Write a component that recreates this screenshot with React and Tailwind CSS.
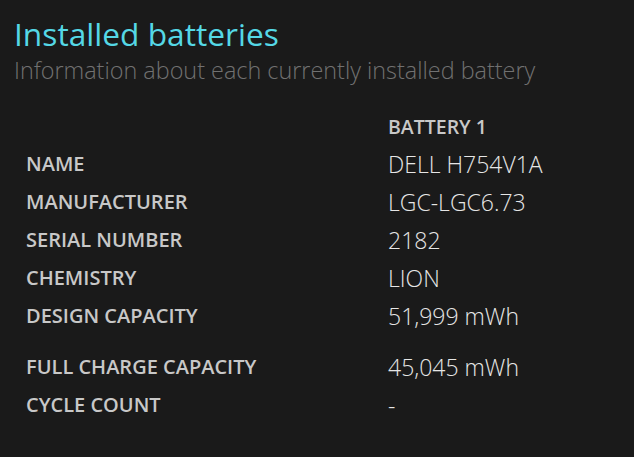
export default function App() {
  const rows = [
    ["NAME", "DELL H754V1A", ""],
    ["MANUFACTURER", "LGC-LGC6.73", ""],
    ["SERIAL NUMBER", "2182", ""],
    ["CHEMISTRY", "LION", ""],
    ["DESIGN CAPACITY", "51,999 mWh", ""],
    ["FULL CHARGE CAPACITY", "45,045 mWh", "mt-[13px]"],
    ["CYCLE COUNT", "-", ""],
  ];
  return (
    <div
      className="w-[634px] h-[457px] bg-[#1a1a1a] overflow-hidden"
      style={{ fontFamily: '"Open Sans", "Noto Sans", sans-serif' }}
    >
      <div className="pl-[14px] pt-[14px]">
        <h1 className="text-[31.7px] leading-[40px] text-[#55d8e6]">Installed batteries</h1>
        <p className="text-[23.4px] leading-[32px] font-light text-[#717171]">
          Information about each currently installed battery
        </p>
      </div>
      <div className="pl-[26px] mt-[23px]">
        <div className="grid grid-cols-[362px_1fr] h-[36px] items-center">
          <div />
          <div className="text-[19.5px] font-semibold text-[#c8c8c8]">BATTERY 1</div>
        </div>
        {rows.map(([label, value, extra]) => (
          <div key={label} className={`grid grid-cols-[362px_1fr] h-[38px] items-center ${extra}`}>
            <div className="text-[20px] font-semibold text-[#c8c8c8]">{label}</div>
            <div className="text-[23px] font-light text-[#e6e6e6]">{value}</div>
          </div>
        ))}
      </div>
    </div>
  );
}
